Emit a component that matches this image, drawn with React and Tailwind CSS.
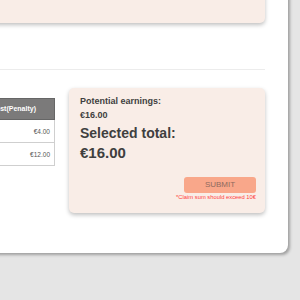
// App.jsx
const font = { fontFamily: '"Liberation Sans", Arial, sans-serif' };

const ROWS = ["€4.00", "€12.00"];

export default function App() {
  return (
    <div className="w-[300px] h-[300px] bg-[#e5e5e5] overflow-hidden" style={font}>
      {/* Page card */}
      <div className="mt-[-200px] ml-[-400px] w-[688px] h-[453px] bg-white rounded-br-[8px] shadow-[2px_2px_3px_rgba(0,0,0,0.3)] pt-[20px] pl-[20px] pr-[23px]">
        {/* Upper panel */}
        <div className="h-[203px] bg-[#f9ede7] rounded-b-[5px] shadow-[0_2px_4px_rgba(0,0,0,0.25)]" />

        {/* Divider */}
        <div className="mt-[46px] border-t border-[#ececec]" />

        <div className="mt-[18px] flex gap-[14px] items-start">
          {/* Claims table */}
          <div className="flex-1 mt-[10px]">
            <table className="w-full border-collapse text-[6.5px]">
              <thead>
                <tr className="h-[21px] bg-[#7b7a7a] text-white text-[7px]">
                  <th className="border border-[#666] text-left font-bold pl-[8px]">Claim</th>
                  <th className="border border-[#666] text-right font-bold pr-[18px]">Cost(Penalty)</th>
                </tr>
              </thead>
              <tbody>
                {ROWS.map((v) => (
                  <tr key={v} className="h-[23px] text-[#555]">
                    <td className="border border-[#cfcfcf]" />
                    <td className="border border-[#cfcfcf] text-right pr-[4px] pt-[2px]">{v}</td>
                  </tr>
                ))}
              </tbody>
            </table>
          </div>

          {/* Summary card */}
          <div className="w-[196px] h-[125px] bg-[#f9ede7] rounded-[5px] shadow-[0_2px_4px_rgba(0,0,0,0.25)] pt-[8px] pl-[11px] pr-[9px] flex flex-col text-[#3f3f3f]">
            <p className="text-[9px] leading-[11px] font-bold">Potential earnings:</p>
            <p className="mt-[3px] text-[9px] leading-[10px] font-bold">€16.00</p>
            <p className="mt-[5px] text-[14px] leading-[16px] font-bold">Selected total:</p>
            <p className="mt-[3px] text-[15px] leading-[18px] font-bold">€16.00</p>
            <button className="mt-[15px] self-end w-[72px] h-[16px] rounded-[3px] bg-[#f9a78a] text-[#8f6a5e] text-[8px] leading-[16px] uppercase">
              Submit
            </button>
            <p className="mt-[1px] self-end text-[5.8px] leading-[7px] text-[#ff3d3d]">
              *Claim sum should exceed 10€
            </p>
          </div>
        </div>
      </div>
    </div>
  );
}
